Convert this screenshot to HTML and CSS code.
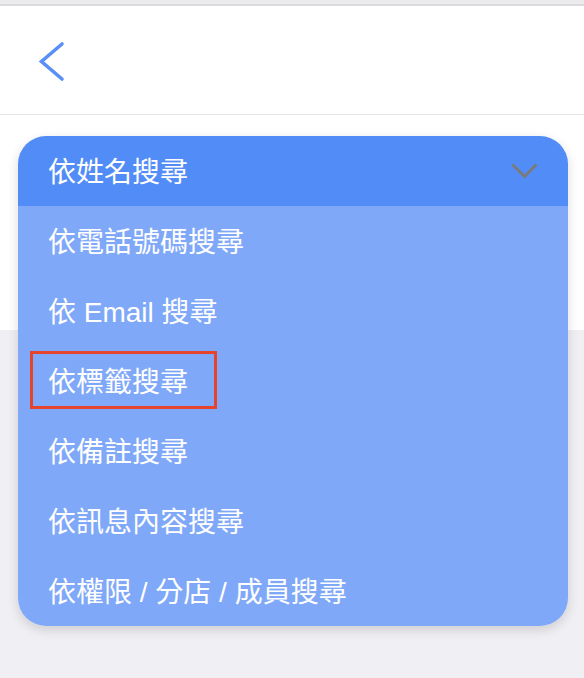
FILE: index.html
```html
<!DOCTYPE html>
<html lang="zh-Hant">
<head>
<meta charset="utf-8">
<title>搜尋</title>
<link rel="stylesheet" href="styles.css">
</head>
<body>
<div class="topstrip"></div>
<header class="navbar">
  <button class="back" aria-label="返回">
    <svg width="30" height="44" viewBox="0 0 30 44"><path d="M25 4 L4.5 21.5 L25 39" fill="none" stroke="#5990f7" stroke-width="3.6" stroke-linecap="round" stroke-linejoin="miter"/></svg>
  </button>
</header>
<section class="panel">
  <div class="dropdown">
    <div class="dd-head">
      <span>依姓名搜尋</span>
      <svg class="caret" width="27" height="16" viewBox="0 0 27 16"><path d="M1.5 1.5 L13.5 13.5 L25.5 1.5" fill="none" stroke="#7a7a7a" stroke-width="2.8"/></svg>
    </div>
    <ul class="dd-list">
      <li>依電話號碼搜尋</li>
      <li>依 Email 搜尋</li>
      <li class="marked">依標籤搜尋<span class="highlight"></span></li>
      <li>依備註搜尋</li>
      <li>依訊息內容搜尋</li>
      <li>依權限 / 分店 / 成員搜尋</li>
    </ul>
  </div>
</section>
</body>
</html>
```

FILE: styles.css
```css
* { box-sizing: border-box; }
html, body {
  margin: 0;
  padding: 0;
}
body {
  background: #efeff4;
  font-family: "Liberation Sans", "Noto Sans CJK TC", sans-serif;
  width: 584px;
  height: 678px;
  overflow: hidden;
}
.topstrip {
  height: 6px;
  background: #ebebed;
  border-bottom: 2px solid #d9d9de;
}
.navbar {
  height: 109px;
  background: #fff;
  border-bottom: 1px solid #e4e4e9;
  display: flex;
  align-items: flex-start;
}
.back {
  border: 0;
  background: none;
  padding: 0;
  margin: 34px 0 0 37px;
  display: block;
  cursor: pointer;
}
.back svg { display: block; }
.panel {
  position: relative;
  height: 215px;
  background: #fff;
}
.dropdown {
  position: absolute;
  top: 21px;
  left: 18px;
  width: 550px;
  border-radius: 28px;
  overflow: hidden;
  box-shadow: 0 4px 12px rgba(0, 0, 0, 0.14);
  color: #fff;
  font-size: 28px;
}
.dd-head {
  height: 70px;
  background: #528cf6;
  display: flex;
  align-items: center;
  justify-content: space-between;
  padding: 0 30px 3px 30px;
}
.caret { display: block; margin-top: 2px; }
.dd-list {
  list-style: none;
  margin: 0;
  padding: 0;
  background: #7fa8f8;
}
.dd-list li {
  position: relative;
  height: 70px;
  display: flex;
  align-items: center;
  padding: 0 0 3px 30px;
  white-space: pre;
}
.highlight {
  position: absolute;
  left: 12px;
  top: 5px;
  width: 187px;
  height: 58px;
  border: 3px solid #e5432c;
}
```
